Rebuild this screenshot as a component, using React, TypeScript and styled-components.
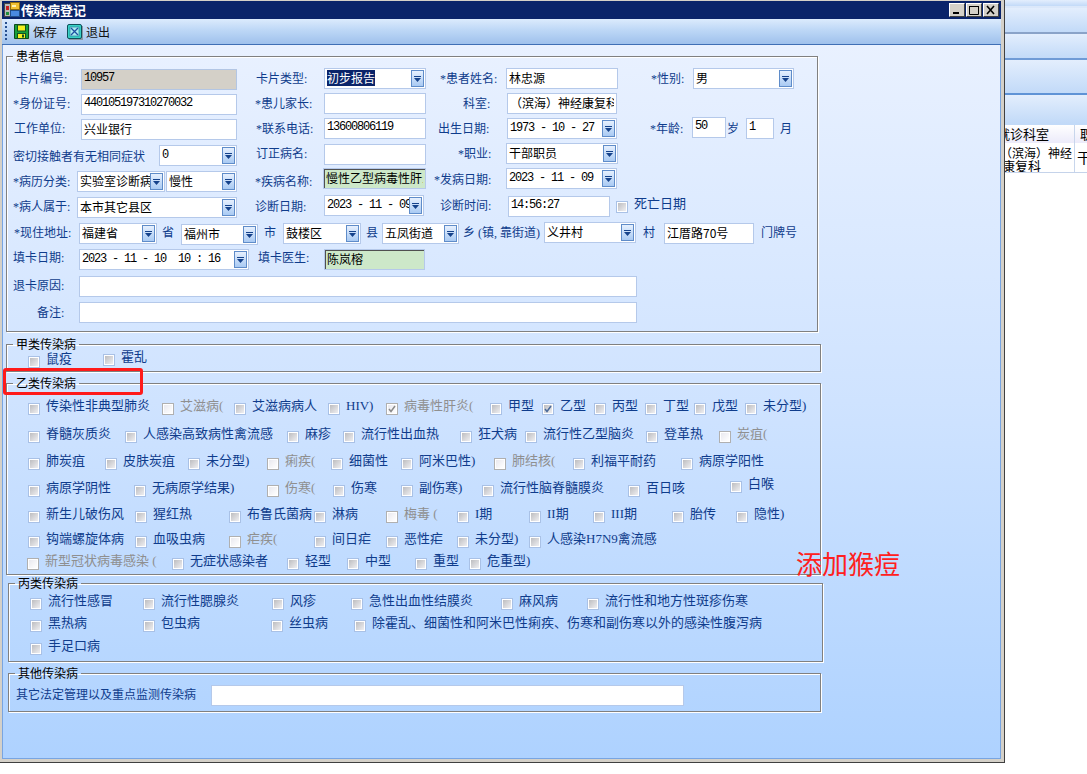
import React from "react";
import styled, { createGlobalStyle } from "styled-components";

const FONT = `"Liberation Serif", "Noto Sans CJK SC", serif`;
const CJK = `"Noto Sans CJK SC", "Liberation Sans", sans-serif`;
const MONO = `"Liberation Mono", "Noto Sans CJK SC", monospace`;

const Global = createGlobalStyle`
  html, body { margin: 0; padding: 0; background: #fff; }
  * { box-sizing: border-box; }
`;

const Page = styled.div`
  position: relative;
  width: 1087px;
  height: 774px;
  overflow: hidden;
  display: flex;
  align-items: flex-start;
  background: #fff;
  font-family: ${FONT};
`;

const Win = styled.div`
  width: 1005px;
  height: 763px;
  flex: none;
  display: flex;
  flex-direction: column;
  padding: 1px 3px 3px 2px;
  background: #d4d0c8;
  border-right: 1px solid #404040;
  border-bottom: 1px solid #404040;
`;

const TitleBar = styled.div`
  height: 18px;
  flex: none;
  display: flex;
  align-items: center;
  background: #0a246a;
  padding: 0 2px 0 2px;
  gap: 1px;
`;

const TitleText = styled.div`
  flex: 1;
  color: #fff;
  font: bold 13px ${CJK};
  line-height: 18px;
`;

const WinButtons = styled.div`
  display: flex;
  align-items: center;
  gap: 1px;
`;

const WinBtn = styled.div`
  width: 16px;
  height: 14px;
  background: #d4d0c8;
  border: 1px solid;
  border-color: #fff #404040 #404040 #fff;
  display: flex;
  align-items: center;
  justify-content: center;
`;

const ToolBar = styled.div`
  height: 26px;
  flex: none;
  display: flex;
  align-items: center;
  background: linear-gradient(#dcebfd 0%, #bdd7f6 45%, #9fc1ec 100%);
  border-bottom: 1px solid #3f6fb5;
  padding-left: 3px;
`;

const Grip = styled.div`
  width: 2px;
  height: 20px;
  margin-right: 5px;
  background: repeating-linear-gradient(#274f8f 0 2px, transparent 2px 4px);
`;

const ToolBtn = styled.div`
  display: flex;
  align-items: center;
  gap: 3px;
  width: 53px;
  padding-left: 2px;
  color: #111;
  font: 12px ${CJK};
`;

const Body = styled.div`
  flex: 1;
  padding-top: 4px;
  border: 1px solid #78a5e2;
  border-top: 0;
  background: linear-gradient(#e9f1ff 0%, #cfe3ff 50%, #aed2ff 100%);
`;

const Group = styled.fieldset<{ $x: number; $w: number; $h: number; $gap: number; $pad: number }>`
  display: block;
  min-width: 0;
  margin: ${(p) => p.$gap}px 0 0 ${(p) => p.$x - 3}px;
  padding: ${(p) => p.$pad}px 0 0 0;
  width: ${(p) => p.$w}px;
  height: ${(p) => p.$h}px;
  border: 1px solid #808080;
  box-shadow: 1px 1px 0 #fff, inset 1px 1px 0 #fff;
`;

const Legend = styled.legend`
  margin-left: 6px;
  padding: 0 3px;
  height: 14px;
  font: 12px/14px ${CJK};
  color: #000;
`;

const RowLine = styled.div<{ $h: number; $pad: number }>`
  display: flex;
  align-items: flex-start;
  height: ${(p) => p.$h}px;
  padding-left: ${(p) => p.$pad}px;
`;

const Slot = styled.div<{ $w?: number; $dy: number }>`
  flex: none;
  width: ${(p) => (p.$w ? `${p.$w}px` : "auto")};
  margin-top: ${(p) => p.$dy}px;
`;

const Label = styled.div<{ $big?: boolean }>`
  height: 21px;
  line-height: 21px;
  font-size: ${(p) => (p.$big ? 13 : 12)}px;
  color: #0f3c8c;
  white-space: nowrap;
`;

const Input = styled.input<{ $w: number; $tone?: string; $mono?: boolean }>`
  display: block;
  width: ${(p) => p.$w}px;
  height: 21px;
  padding: 0 2px ${(p) => (p.$mono ? 3 : 2)}px;
  margin: 0;
  outline: none;
  border: 1px solid ${(p) => (p.$tone === "gray" ? "#b3c6e4" : "#b5c9ea")};
  background: ${(p) => (p.$tone === "gray" ? "#d4d0c8" : p.$tone === "green" ? "#cde8c9" : "#fff")};
  box-shadow: ${(p) => (p.$tone === "green" ? "inset 1px 1px 0 #505050" : "none")};
  color: #000;
  font-family: ${(p) => (p.$mono ? MONO : CJK)};
  font-size: 12px;
  letter-spacing: ${(p) => (p.$mono ? "-1.2px" : "0")};
`;

const ComboBox = styled.div<{ $w: number }>`
  display: flex;
  align-items: center;
  width: ${(p) => p.$w}px;
  height: 21px;
  padding: 0 1px 0 2px;
  background: #fff;
  border: 1px solid #b5c9ea;
`;

const ComboText = styled.div<{ $mono?: boolean }>`
  flex: 1;
  min-width: 0;
  overflow: hidden;
  white-space: pre;
  margin-top: ${(p) => (p.$mono ? -2 : -1)}px;
  font-family: ${(p) => (p.$mono ? MONO : CJK)};
  font-size: 12px;
  line-height: 16px;
  color: #000;
  letter-spacing: ${(p) => (p.$mono ? "-1.2px" : "0")};
`;

const Selected = styled.span`
  background: #0a246a;
  color: #fff;
`;

const DropBtn = styled.div`
  flex: none;
  width: 13px;
  height: 17px;
  display: flex;
  align-items: center;
  justify-content: center;
  border: 1px solid #5f8cc9;
  background: linear-gradient(#e6f0fe, #a9caf3);
`;

const CheckSlot = styled.div<{ $w?: number; $dy: number }>`
  flex: none;
  display: flex;
  align-items: flex-start;
  gap: 6px;
  width: ${(p) => (p.$w ? `${p.$w}px` : "auto")};
  margin-top: ${(p) => p.$dy}px;
`;

const Box = styled.div<{ $off?: boolean }>`
  position: relative;
  flex: none;
  width: 12px;
  height: 12px;
  border: 1px solid ${(p) => (p.$off ? "#b0b0b0" : "#a9c1e6")};
  padding: 1px;
  background: #fff;
`;

const BoxFill = styled.div<{ $off?: boolean }>`
  width: 100%;
  height: 100%;
  background: ${(p) =>
    p.$off ? "linear-gradient(135deg,#e9e9ef,#fff)" : "linear-gradient(135deg,#bdbdc0,#efeff2)"};
`;

const CheckMark = styled.svg`
  position: absolute;
  left: 1px;
  top: 1px;
`;

const CheckText = styled.div<{ $off?: boolean }>`
  margin-top: -4px;
  font-size: 13px;
  line-height: 14px;
  white-space: pre;
  color: ${(p) => (p.$off ? "#8f8f8f" : "#0f3c8c")};
`;

const Side = styled.div`
  flex: 1;
  height: 173px;
  display: flex;
  flex-direction: column;
  overflow: hidden;
`;

const Band = styled.div<{ $h: number; $line: string }>`
  height: ${(p) => p.$h}px;
  flex: none;
  background: linear-gradient(#e3eefd, #c2daf8);
  border-bottom: 2px solid ${(p) => p.$line};
`;

const TableHead = styled.div`
  flex: none;
  display: grid;
  grid-template-columns: 69px minmax(0, 1fr);
  height: 18px;
  background: linear-gradient(#fff, #ecebfa);
`;

const TableRow = styled.div`
  flex: none;
  display: grid;
  grid-template-columns: 69px minmax(0, 1fr);
  height: 30px;
  background: #fff;
  border-bottom: 1px solid #c5d3ea;
`;

const HeadCell = styled.div`
  overflow: hidden;
  font: 13px/18px ${CJK};
  white-space: nowrap;
  color: #000;
  text-indent: -8px;
  & + & {
    border-left: 1px solid #c8d6ec;
    text-indent: 5px;
  }
`;

const BodyCell = styled.div`
  overflow: hidden;
  color: #000;
  padding-top: 3px;
  & + & {
    border-left: 1px solid #c8d6ec;
    padding: 6px 0 0 2px;
    font: 14px/16px ${CJK};
    white-space: nowrap;
  }
`;

const CellLine = styled.div<{ $shift: number; $size: number }>`
  white-space: nowrap;
  margin-left: ${(p) => p.$shift}px;
  font: ${(p) => p.$size}px/13px ${CJK};
`;

const RedBox = styled.div`
  position: absolute;
  left: 3px;
  top: 368px;
  width: 140px;
  height: 27px;
  border: 3px solid #ff1a1a;
  border-radius: 3px;
`;

const Note = styled.div`
  position: absolute;
  left: 796px;
  top: 545px;
  font: 26px/36px ${CJK};
  color: #ff2020;
  white-space: nowrap;
`;

type Item =
  | { k: "l"; x: number; y: number; t: string; big?: boolean }
  | { k: "i"; x: number; y: number; w: number; v: string; tone?: string; mono?: boolean }
  | { k: "c"; x: number; y: number; w: number; v: string; sel?: boolean; mono?: boolean }
  | { k: "x"; x: number; y: number };

const L = (x: number, y: number, t: string, big?: boolean): Item => ({ k: "l", x, y, t, big });
const I = (x: number, y: number, w: number, v = "", mono?: boolean, tone?: string): Item => ({ k: "i", x, y, w, v, mono, tone });
const C = (x: number, y: number, w: number, v: string, mono?: boolean, sel?: boolean): Item => ({ k: "c", x, y, w, v, mono, sel });

const formRows: { y: number; items: Item[] }[] = [
  { y: 68, items: [L(16, 69, "卡片编号:"), I(81, 69, 156, "10957", true, "gray"), L(256, 69, "卡片类型:"), C(324, 68, 102, "初步报告", false, true), L(440, 69, "*患者姓名:"), I(506, 68, 112, "林忠源"), L(651, 69, "*性别:"), C(693, 68, 101, "男")] },
  { y: 93, items: [L(13, 94, "*身份证号:"), I(81, 94, 156, "440105197310270032", true), L(255, 94, "*患儿家长:"), I(324, 93, 102), L(463, 94, "科室:"), I(507, 93, 110, "（滨海）神经康复科")] },
  { y: 117, items: [L(14, 119, "工作单位:"), I(81, 119, 156, "兴业银行"), L(256, 119, "*联系电话:"), I(324, 118, 102, "13600806119", true), L(438, 119, "出生日期:"), C(507, 118, 110, "1973 - 10 - 27", true), L(650, 119, "*年龄:"), I(692, 117, 34, "50", true), L(727, 119, "岁"), I(746, 118, 28, "1", true), L(780, 119, "月")] },
  { y: 143, items: [L(13, 147, "密切接触者有无相同症状"), C(159, 145, 78, "0", true), L(256, 144, "订正病名:"), I(324, 144, 102), L(458, 144, "*职业:"), C(506, 143, 112, "干部职员")] },
  { y: 168, items: [L(13, 172, "*病历分类:"), C(77, 171, 88, "实验室诊断病例"), C(166, 171, 71, "慢性"), L(255, 172, "*疾病名称:"), I(323, 168, 103, "慢性乙型病毒性肝炎", false, "green"), L(434, 170, "*发病日期:"), C(506, 168, 111, "2023 - 11 - 09", true)] },
  { y: 195, items: [L(13, 197, "*病人属于:"), C(77, 197, 160, "本市其它县区"), L(255, 197, "诊断日期:"), C(324, 195, 100, "2023 - 11 - 09", true), L(440, 196, "诊断时间:"), I(508, 196, 102, "14:56:27", true), { k: "x", x: 616, y: 201 }, L(634, 193, "死亡日期", true)] },
  { y: 222, items: [L(14, 223, "*现住地址:"), C(79, 223, 78, "福建省"), L(162, 223, "省"), C(181, 224, 77, "福州市"), L(264, 223, "市"), C(283, 223, 78, "鼓楼区"), L(366, 223, "县"), C(382, 223, 77, "五凤街道"), L(463, 223, "乡 (镇, 靠街道)"), C(544, 222, 92, "义井村"), L(643, 223, "村"), I(664, 223, 90, "江厝路70号"), L(761, 223, "门牌号")] },
  { y: 248, items: [L(13, 248, "填卡日期:"), C(79, 249, 170, "2023 - 11 - 10  10 : 16", true), L(258, 248, "填卡医生:"), I(324, 249, 101, "陈岚榕", false, "green")] },
  { y: 276, items: [L(13, 276, "退卡原因:"), I(79, 276, 558)] },
  { y: 302, items: [L(37, 303, "备注:"), I(79, 302, 558)] },
];

type Chk = [number, string, number, ("off" | "on" | "offon")?];

const group2: { y: number; c: Chk[] }[] = [
  { y: 403, c: [[46, "传染性非典型肺炎", 0], [180, "艾滋病(", 0, "off"], [252, "艾滋病病人", 0], [346, "HIV)", 0], [404, "病毒性肝炎(", 0, "offon"], [508, "甲型", 0], [560, "乙型", 0, "on"], [612, "丙型", 0], [663, "丁型", 0], [712, "戊型", 0], [763, "未分型)", 0]] },
  { y: 431, c: [[46, "脊髓灰质炎", 0], [143, "人感染高致病性禽流感", 0], [305, "麻疹", 0], [361, "流行性出血热", 0], [478, "狂犬病", 0], [543, "流行性乙型脑炎", 0], [664, "登革热", 0], [737, "炭疽(", 0, "off"]] },
  { y: 458, c: [[46, "肺炭疽", 0], [123, "皮肤炭疽", 0], [206, "未分型)", 0], [285, "痢疾(", 0, "off"], [349, "细菌性", 0], [419, "阿米巴性)", 0], [512, "肺结核(", 0, "off"], [591, "利福平耐药", 0], [699, "病原学阳性", 0]] },
  { y: 485, c: [[46, "病原学阴性", 0], [152, "无病原学结果)", 0], [285, "伤寒(", 0, "off"], [351, "伤寒", 0], [419, "副伤寒)", 0], [500, "流行性脑脊髓膜炎", 0], [646, "百日咳", 0], [748, "白喉", -4]] },
  { y: 511, c: [[46, "新生儿破伤风", 0], [153, "猩红热", 0], [247, "布鲁氏菌病", 0], [332, "淋病", 0], [404, "梅毒 (", 0, "off"], [475, "I期", 0], [547, "II期", 0], [611, "III期", 0], [690, "胎传", 0], [754, "隐性)", 0]] },
  { y: 536, c: [[46, "钩端螺旋体病", 0], [153, "血吸虫病", 0], [247, "疟疾(", 0, "off"], [332, "间日疟", 0], [404, "恶性疟", 0], [475, "未分型)", 0], [547, "人感染H7N9禽流感", 0]] },
  { y: 558, c: [[45, "新型冠状病毒感染 (", 0, "off"], [190, "无症状感染者", 0], [305, "轻型", 0], [365, "中型", 0], [433, "重型", 0], [487, "危重型)", 0]] },
];

const group1: { y: number; c: Chk[] }[] = [
  { y: 356, c: [[46, "鼠疫", 0], [121, "霍乱", -2]] },
];

const group3: { y: number; c: Chk[] }[] = [
  { y: 598, c: [[48, "流行性感冒", 0], [161, "流行性腮腺炎", 0], [290, "风疹", 0], [369, "急性出血性结膜炎", 0], [519, "麻风病", 0], [605, "流行性和地方性斑疹伤寒", 0]] },
  { y: 620, c: [[48, "黑热病", 0], [161, "包虫病", 0], [289, "丝虫病", 0], [372, "除霍乱、细菌性和阿米巴性痢疾、伤寒和副伤寒以外的感染性腹泻病", 0]] },
  { y: 643, c: [[48, "手足口病", 0]] },
];

const Arrow = () => (
  <svg width="7" height="6" viewBox="0 0 7 6">
    <path d="M0 0h7v1H0zM0 2h7L3.500 6z" fill="#15428b" />
  </svg>
);

const Combo = ({ w, v, mono, sel }: { w: number; v: string; mono?: boolean; sel?: boolean }) => (
  <ComboBox $w={w}>
    <ComboText $mono={mono}>{sel ? <Selected>{v}</Selected> : v}</ComboText>
    <DropBtn>
      <Arrow />
    </DropBtn>
  </ComboBox>
);

const Check = ({ state }: { state?: string }) => (
  <Box $off={state === "off" || state === "offon"}>
    <BoxFill $off={state === "off" || state === "offon"} />
    {(state === "on" || state === "offon") && (
      <CheckMark width="8" height="8" viewBox="0 0 8 8">
        <path d="M1 4l2 2.500L7 1" fill="none" stroke={state === "on" ? "#4a6a9a" : "#8a8a8a"} strokeWidth="1.500" />
      </CheckMark>
    )}
  </Box>
);

const FormRow = ({ items, y, next, base }: { items: Item[]; y: number; next: number; base: number }) => (
  <RowLine $h={next - y} $pad={items[0].x - base}>
    {items.map((it, i) => {
      const w = items[i + 1] ? items[i + 1].x - it.x : undefined;
      return (
        <Slot key={i} $w={w} $dy={it.y - y}>
          {it.k === "l" && <Label $big={it.big}>{it.t}</Label>}
          {it.k === "i" && <Input readOnly $w={it.w} $tone={it.tone} $mono={it.mono} value={it.v} />}
          {it.k === "c" && <Combo w={it.w} v={it.v} mono={it.mono} sel={it.sel} />}
          {it.k === "x" && <Check />}
        </Slot>
      );
    })}
  </RowLine>
);

const CheckRows = ({ rows, base, end }: { rows: { y: number; c: Chk[] }[]; base: number; end: number }) => (
  <>
    {rows.map((r, ri) => {
      const next = rows[ri + 1] ? rows[ri + 1].y : end;
      return (
        <RowLine key={r.y} $h={next - r.y} $pad={r.c[0][0] - 18 - base}>
          {r.c.map(([tx, t, dy, st], i) => (
            <CheckSlot key={t + i} $w={r.c[i + 1] ? r.c[i + 1][0] - tx : undefined} $dy={dy}>
              <Check state={st} />
              <CheckText $off={st === "off" || st === "offon"}>{t}</CheckText>
            </CheckSlot>
          ))}
        </RowLine>
      );
    })}
  </>
);

const AppIcon = () => (
  <svg width="16" height="16" viewBox="0 0 16 16">
    <rect x="0.500" y="1.500" width="6" height="13" fill="#b8b8b8" stroke="#444" />
    <rect x="2" y="4" width="3" height="4" fill="#c81e1e" />
    <rect x="2" y="10" width="3" height="3" fill="#1e8c3a" />
    <rect x="6.500" y="0.500" width="9" height="7" fill="#f0c030" stroke="#8a6a10" />
    <rect x="6.500" y="8.500" width="9" height="6" fill="#4a8ae0" stroke="#234f8a" />
    <rect x="8" y="3" width="4" height="2" fill="#fff3b0" />
  </svg>
);

const SaveIcon = () => (
  <svg width="16" height="16" viewBox="0 0 16 16">
    <rect x="1" y="1" width="15" height="15" fill="#b6c3d4" />
    <path d="M0.500 0.500H14.500V14.500H0.500Z" fill="#17a03b" stroke="#0a4a1c" />
    <rect x="3.500" y="1" width="8" height="6" fill="#f3f01e" stroke="#14501f" />
    <rect x="3.500" y="9.500" width="8" height="5" fill="#f3f01e" stroke="#14501f" />
    <rect x="8" y="10.500" width="2" height="3" fill="#14501f" />
  </svg>
);

const ExitIcon = () => (
  <svg width="16" height="16" viewBox="0 0 16 16">
    <rect x="2" y="2" width="14" height="14" fill="#8b97a6" />
    <rect x="0.500" y="0.500" width="14" height="14" rx="1.500" fill="#37d0c4" stroke="#0e4f5a" />
    <rect x="3" y="3" width="9" height="9" fill="#a8ecf0" stroke="#2a7f9a" strokeWidth="0.700" />
    <path d="M4 4l7 7M11 4l-7 7" stroke="#1d4fa0" strokeWidth="1.300" />
  </svg>
);

export default function App() {
  return (
    <Page>
      <Global />
      <Win>
        <TitleBar>
          <AppIcon />
          <TitleText>传染病登记</TitleText>
          <WinButtons>
            <WinBtn>
              <svg width="12" height="10" viewBox="0 0 12 10">
                <rect x="2" y="7" width="6" height="2" fill="#000" />
              </svg>
            </WinBtn>
            <WinBtn>
              <svg width="12" height="10" viewBox="0 0 12 10">
                <path d="M1.500 1.500h9v8h-9z M1 1.500h10" fill="none" stroke="#000" />
              </svg>
            </WinBtn>
            <WinBtn>
              <svg width="12" height="10" viewBox="0 0 12 10">
                <path d="M2 1l7 8M9 1l-7 8" stroke="#000" strokeWidth="1.600" />
              </svg>
            </WinBtn>
          </WinButtons>
        </TitleBar>
        <ToolBar>
          <Grip />
          <ToolBtn>
            <SaveIcon />
            保存
          </ToolBtn>
          <ToolBtn>
            <ExitIcon />
            退出
          </ToolBtn>
        </ToolBar>
        <Body>
          <Group $x={6} $w={812} $h={283} $gap={0} $pad={5}>
            <Legend>患者信息</Legend>
            {formRows.map((r, i) => (
              <FormRow key={r.y} y={r.y} next={formRows[i + 1] ? formRows[i + 1].y : 330} items={r.items} base={7} />
            ))}
          </Group>
          <Group $x={6} $w={815} $h={35} $gap={5} $pad={5}>
            <Legend>甲类传染病</Legend>
            <CheckRows rows={group1} base={7} end={370} />
          </Group>
          <Group $x={6} $w={815} $h={199} $gap={4} $pad={13}>
            <Legend>乙类传染病</Legend>
            <CheckRows rows={group2} base={7} end={573} />
          </Group>
          <Group $x={8} $w={815} $h={86} $gap={1} $pad={8}>
            <Legend>丙类传染病</Legend>
            <CheckRows rows={group3} base={9} end={660} />
          </Group>
          <Group $x={8} $w={813} $h={46} $gap={4} $pad={5}>
            <Legend>其他传染病</Legend>
            <RowLine $h={26} $pad={7}>
              <Slot $w={195} $dy={0}>
                <Label>其它法定管理以及重点监测传染病</Label>
              </Slot>
              <Slot $dy={0}>
                <Input readOnly $w={473} value="" />
              </Slot>
            </RowLine>
          </Group>
        </Body>
      </Win>
      <Side>
        <Band $h={8} $line="#dbe8fa" />
        <Band $h={26} $line="#8aa3c8" />
        <Band $h={26} $line="#6f9bd6" />
        <Band $h={35} $line="#5f93d6" />
        <Band $h={30} $line="#c2daf8" />
        <TableHead>
          <HeadCell>就诊科室</HeadCell>
          <HeadCell>职业</HeadCell>
        </TableHead>
        <TableRow>
          <BodyCell>
            <CellLine $shift={-5} $size={12}>（滨海）神经</CellLine>
            <CellLine $shift={-3} $size={13}>康复科</CellLine>
          </BodyCell>
          <BodyCell>干部职员</BodyCell>
        </TableRow>
      </Side>
      <RedBox />
      <Note>添加猴痘</Note>
    </Page>
  );
}
